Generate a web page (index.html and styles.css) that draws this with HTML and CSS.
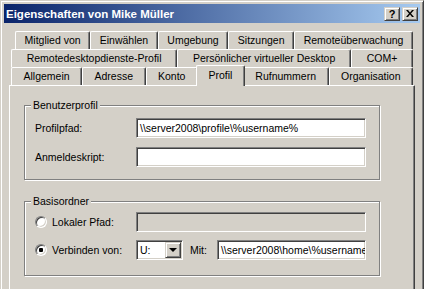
FILE: index.html
```html
<!DOCTYPE html>
<html lang="de">
<head>
  <meta charset="UTF-8">
  <title>Eigenschaften von Mike Müller</title>
  <link rel="stylesheet" href="styles.css">
</head>
<body>
  <div class="window">
    <div class="titlebar">
      <span class="title">Eigenschaften von Mike Müller</span>
      <div class="caption-buttons">
        <span class="caption-btn help">?</span>
        <span class="caption-btn close">
          <svg width="8" height="7" viewBox="0 0 8 7"><path d="M0 0h2l2 2.4L6 0h2L5 3.5 8 7H6L4 4.6 2 7H0l3-3.5z" fill="#000"/></svg>
        </span>
      </div>
    </div>

    <div class="client">
      <!-- tab rows, back to front -->
      <div class="tabs">
        <div class="tab-row back">
          <span class="tab">Mitglied von</span>
          <span class="tab">Einwählen</span>
          <span class="tab">Umgebung</span>
          <span class="tab">Sitzungen</span>
          <span class="tab">Remoteüberwachung</span>
        </div>
        <div class="tab-row">
          <span class="tab">Remotedesktopdienste-Profil</span>
          <span class="tab">Persönlicher virtueller Desktop</span>
          <span class="tab">COM+</span>
        </div>
        <div class="tab-row">
          <span class="tab">Allgemein</span>
          <span class="tab">Adresse</span>
          <span class="tab">Konto</span>
          <span class="tab active">Profil</span>
          <span class="tab">Rufnummern</span>
          <span class="tab">Organisation</span>
        </div>
      </div>

      <div class="panel">
        <div class="group">
          <span class="group-title">Benutzerprofil</span>
          <div class="form-grid">
            <label>Profilpfad:</label>
            <div class="field">\\server2008\profile\%username%</div>
            <label>Anmeldeskript:</label>
            <div class="field"></div>
          </div>
        </div>

        <div class="group home">
          <span class="group-title">Basisordner</span>
          <div class="form-grid">
            <label class="radio-label"><span class="radio"></span>Lokaler Pfad:</label>
            <div class="field disabled"></div>
            <label class="radio-label"><span class="radio checked"></span>Verbinden von:</label>
            <div class="connect-row">
              <div class="combo">
                <span class="combo-value">U:</span>
                <span class="combo-btn"><span class="arrow"></span></span>
              </div>
              <span class="mit">Mit:</span>
              <div class="field grow">\\server2008\home\%username%</div>
            </div>
          </div>
        </div>
      </div>
    </div>
  </div>
</body>
</html>
```

FILE: styles.css
```css
html, body {
  margin: 0;
  padding: 0;
  overflow: hidden;
}
body {
  background: #d4d0c8;
  font-family: "Liberation Sans", Arial, sans-serif;
  font-size: 10.5px;
  color: #000;
}

/* window frame */
.window {
  width: 424px;
  height: 289px;
  box-sizing: border-box;
  border: 1px solid;
  border-color: #d4d0c8 #404040 #404040 #d4d0c8;
  border-bottom-width: 0;
  padding: 3px 3px 0 3px;
  box-shadow: inset 1px 1px #fff, inset -1px 0 #808080;
  display: flex;
  flex-direction: column;
  overflow: hidden;
}

.titlebar {
  height: 19px;
  display: flex;
  align-items: center;
  justify-content: space-between;
  background: linear-gradient(to right, #0a246a, #a6caf0);
}
.title {
  padding-left: 2px;
  color: #fff;
  font-weight: bold;
  font-size: 11.5px;
}
.caption-buttons {
  display: flex;
  gap: 2px;
  margin-right: 2px;
}
.caption-btn {
  width: 16px;
  height: 14px;
  box-sizing: border-box;
  display: flex;
  align-items: center;
  justify-content: center;
  background: #d4d0c8;
  border: 1px solid;
  border-color: #d4d0c8 #404040 #404040 #d4d0c8;
  box-shadow: inset 1px 1px #fff, inset -1px -1px #808080;
}
.caption-btn.help {
  font-weight: bold;
  font-size: 11px;
  line-height: 12px;
}

.client {
  flex: 1;
  display: flex;
  flex-direction: column;
  padding: 8px 5px 0 5px;
}

/* tabs */
.tabs {
  display: flex;
  flex-direction: column;
}
.tab-row {
  display: flex;
  align-items: flex-start;
  padding: 0 2px;
}
.tab-row.back {
  padding-left: 6px;
}
.tab {
  flex: 1 0 auto;
  height: 18px;
  box-sizing: border-box;
  padding: 2px 6px 0;
  text-align: center;
  white-space: nowrap;
  background: #d4d0c8;
  border-top: 1px solid #fff;
  border-left: 1px solid #fff;
  border-right: 1px solid #404040;
  border-radius: 2px 2px 0 0;
  box-shadow: inset -1px 0 #808080;
}
.tab.active {
  position: relative;
  z-index: 1;
  height: 21px;
  margin: -2px -2px -1px;
  padding-top: 3px;
}

.panel {
  flex: 1;
  padding: 19px 0 0 14px;
  border-top: 1px solid #fff;
  border-left: 1px solid #fff;
  border-right: 1px solid #404040;
  box-shadow: inset -1px 0 #808080;
}

/* group boxes */
.group {
  width: 356px;
  box-sizing: border-box;
  border: 1px solid #808080;
  box-shadow: inset 1px 1px #fff, 1px 1px #fff;
}
.group.home {
  margin-top: 21px;
}
.group-title {
  display: table;
  margin: -7px 0 0 6px;
  padding: 0 2px;
  line-height: 13px;
  background: #d4d0c8;
}
.form-grid {
  display: grid;
  grid-template-columns: 101px 230px;
  align-items: center;
  row-gap: 9px;
  margin-top: 6px;
  padding: 0 0 12px 10px;
}
.group.home .form-grid {
  row-gap: 8px;
  margin-top: 4px;
  padding-bottom: 15px;
}

.field {
  height: 20px;
  box-sizing: border-box;
  padding: 3px 0 0 3px;
  background: #fff;
  white-space: nowrap;
  overflow: hidden;
  border: 1px solid;
  border-color: #808080 #fff #fff #808080;
  box-shadow: inset 1px 1px #404040, inset -1px -1px #d4d0c8;
}
.field.disabled {
  background: #d4d0c8;
}

.radio-label {
  display: flex;
  align-items: center;
  gap: 5px;
}
.radio {
  width: 12px;
  height: 12px;
  box-sizing: border-box;
  border-radius: 50%;
  background: #fff;
  border: 1px solid;
  border-color: #808080 #fff #fff #808080;
  box-shadow: inset 1px 1px #404040, inset -1px -1px #d4d0c8;
}
.radio.checked {
  background: radial-gradient(circle, #000 0, #000 2px, #fff 2.5px);
}

.connect-row {
  display: flex;
  align-items: center;
}
.combo {
  width: 47px;
  height: 20px;
  box-sizing: border-box;
  display: flex;
  background: #fff;
  border: 1px solid;
  border-color: #808080 #fff #fff #808080;
  box-shadow: inset 1px 1px #404040, inset -1px -1px #d4d0c8;
  padding: 1px;
}
.combo-value {
  flex: 1;
  padding: 2px 0 0 2px;
}
.combo-btn {
  width: 16px;
  box-sizing: border-box;
  display: flex;
  align-items: center;
  justify-content: center;
  background: #d4d0c8;
  border: 1px solid;
  border-color: #d4d0c8 #404040 #404040 #d4d0c8;
  box-shadow: inset 1px 1px #fff, inset -1px -1px #808080;
}
.arrow {
  width: 0;
  height: 0;
  border-left: 4px solid transparent;
  border-right: 4px solid transparent;
  border-top: 4px solid #000;
}
.mit {
  padding: 0 10px 0 7px;
}
.field.grow {
  flex: 1;
}
```
